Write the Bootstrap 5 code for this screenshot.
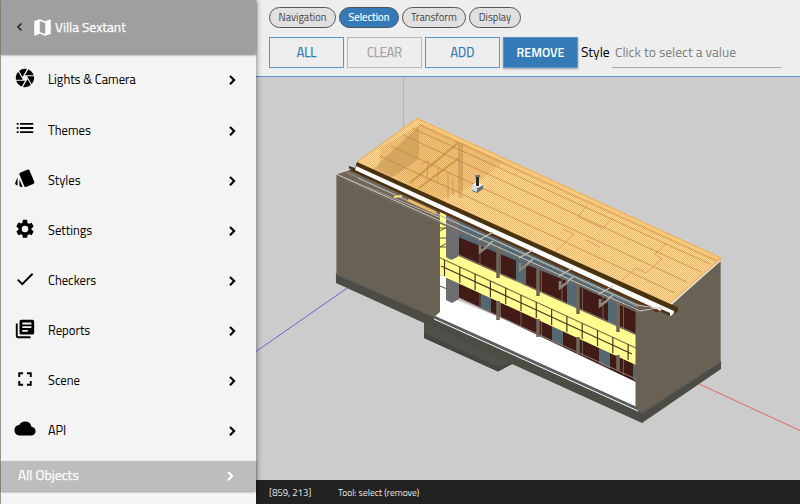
<!DOCTYPE html>
<html lang="en">
<head>
<meta charset="utf-8">
<meta name="viewport" content="width=device-width, initial-scale=1">
<title>Villa Sextant</title>
<link rel="stylesheet" href="https://cdn.jsdelivr.net/npm/bootstrap@5.3.0/dist/css/bootstrap.min.css">
<style>
body{font-family:"Titillium Web",Roboto,sans-serif;background:#ccc;font-size:12.7px;line-height:20px;color:#000}
.sidebar{width:256px;background:#f4f4f4;border-left:1px solid #9b958c;box-shadow:1px 0 5px rgba(0,0,0,.4);z-index:2}
.side-head{height:54px;background:#9f9f9f;color:#fff;font-size:13.6px;-webkit-text-stroke:.25px #fff;box-shadow:0 1px 2px rgba(0,0,0,.5);padding-left:14px;z-index:1}
.side-head .house{width:21px;height:21px;margin:0 2px 0 4px}
.menu{padding-top:1.4px}
.menu .entry{height:50.15px;padding:0 14px 0 12.500px}
.menu .entry>svg:first-child{width:22px;height:22px;margin-top:-4.500px}
.menu .entry span{margin-left:12.500px}
svg{flex:none;display:block}
.chev{width:18px;height:18px}
.all-objects{height:29.500px;margin-top:4.900px;background:#bdbdbd;color:#fff;font-size:13.7px;-webkit-text-stroke:.25px #fff;padding:0 16px 0 17px;box-shadow:0 1px 2px rgba(0,0,0,.4)}
.all-objects span{margin-top:-2px}
.toolbar{height:77px;background:#eee;border-bottom:1.500px solid #658fd6;padding:7px 0 0 13px}
.pills,.tools{gap:3px}
.tools-row{margin-top:9px}
.pill{height:21px;border:1px solid #555;border-radius:11px;background:#e0e0e0;color:#444;font-size:10.6px;line-height:19px;padding:0}
.pill.active{background:#337ab7;color:#fff;border-color:#4b555e;-webkit-text-stroke:.2px #fff}
.w-nav{width:67px}.w-sel{width:60px}.w-tra{width:64px}.w-dis{width:52px}
.tool{width:75px;height:31px;border:1px solid #5b96c9;border-radius:0;color:#337ab7;font-size:12.600px;-webkit-text-stroke:.25px currentColor;padding:0;line-height:29px;background:#eee}
.tool.off{border-color:#b9b9b9;color:#a3a3a3}
.tool.on{background:#337ab7;color:#fff;font-weight:600;-webkit-text-stroke:0;box-shadow:0 1px 2px rgba(0,0,0,.35)}
.style-label{font-size:13.700px;margin:-2px 0 0 3px;width:31px;white-space:nowrap}
.picker{width:170px;height:30px;border-bottom:1px solid #aaa;color:#808080;font-size:13.600px;line-height:28px;padding-left:3px;white-space:nowrap}
.status{height:24px;background:#212121;color:#e8e8e8;font-size:9.5px;padding-left:13px;line-height:25px}
.coords{width:69px}
</style>
<script src="https://cdn.jsdelivr.net/npm/bootstrap@5.3.0/dist/js/bootstrap.bundle.min.js"></script>
</head>
<body class="vh-100 overflow-hidden">
<div class="d-flex vh-100">
<aside class="sidebar flex-shrink-0 d-flex flex-column position-relative">
  <header class="side-head d-flex align-items-center position-relative">
    <svg width="9" height="12" viewBox="0 0 9 12"><path d="M6.500 2.500 3 6l3.500 3.500" fill="none" stroke="#222" stroke-width="1.5"/></svg>
    <svg class="house ms-2" viewBox="0 0 24 24" fill="#fff"><path d="M20.500 3l-.16.03L15 5.100 9 3 3.360 4.900A.5.5 0 0 0 3 5.380V20.500c0 .28.22.5.5.5l.16-.03L9 18.900l6 2.100 5.640-1.900a.5.5 0 0 0 .36-.48V3.500a.5.5 0 0 0-.5-.5zM15 19l-6-2.110V5l6 2.110V19z" transform="translate(-.6 -.6) scale(1.050)"/></svg>
    <span>Villa Sextant</span>
  </header>
  <nav class="menu d-flex flex-column" id="menu"></nav>
  <div class="all-objects d-flex align-items-center justify-content-between"><span>All Objects</span><svg class="chev" viewBox="0 0 24 24" fill="#fff"><path d="M9 5.500 7 7.500l4.500 4.500L7 16.500l2 2 6.500-6.500z"/></svg></div>
</aside>
<main class="flex-grow-1 d-flex flex-column">
  <div class="toolbar">
    <div class="pills d-flex">
      <button class="btn pill w-nav">Navigation</button>
      <button class="btn pill active w-sel">Selection</button>
      <button class="btn pill w-tra">Transform</button>
      <button class="btn pill w-dis">Display</button>
    </div>
    <div class="tools-row d-flex align-items-center">
      <div class="tools d-flex">
        <button class="btn tool">ALL</button><button class="btn tool off">CLEAR</button><button class="btn tool">ADD</button><button class="btn tool on">REMOVE</button>
      </div>
      <span class="style-label">Style</span><div class="picker">Click to select a value</div>
    </div>
  </div>
  <svg width="544" height="403" viewBox="256 77 544 403">
    <defs>
      <pattern id="hatch" width="2" height="2" patternUnits="userSpaceOnUse"><path fill="#ffd894" d="M0 0h2v2H0z"/><path fill="#f3bc70" d="M0 0h1v1H0zM1 1h1v1H1z"/></pattern>
      <clipPath id="roofclip"><path d="M417 118 721 258 670 304 357 163z"/></clipPath>
      <clipPath id="facade"><path d="M440 205 636 294V410L440 317z"/></clipPath>
      <clipPath id="windows"><path d="M458 205 636 286V336L458 257zM458 265 636 345V381L458 297z"/></clipPath>
    </defs>
    <path fill="#ccc" d="M256 77h544v403H256z"/>
    <path d="M403.500 77v56" stroke="#7fdc76"/><path d="M256 351.500 348 287.500" stroke="#6666d8"/><path d="M698 383.500 800 430.500" stroke="#e96862"/>
    <!-- plinth and steps -->
    <path fill="#4c4c45" d="M336 273 424 310 642 411 721 360V369L642 423 512 364 498 371.500 424 338V323L336 283z"/>
    <path fill="#504f49" d="M424 323 512 364 498 367 424 333z"/>
    <path fill="#454640" d="M424 333 498 367 512 362v2L498 371.500 424 338z"/>
    <path d="M336 273.500 434 316 642 412 721 361" fill="none" stroke="#5c5d60" stroke-width="2.500"/>
    <!-- terrace -->
    <path fill="#fff" d="M440 293 636 374V408L434 316z"/>
    <path d="M434 317 636 408" stroke="#5c5d60" stroke-width="3"/><path d="M434 319 638 411" stroke="#fff"/>
    <g clip-path="url(#facade)">
      <path fill="#421b17" d="M458 205 636 286V336L458 257z"/>
      <path fill="#536872" d="M458 208 636 290V309L458 237z"/>
      <path fill="#421b17" d="M458 265 636 345V382L458 297z"/>
      <path fill="#536872" d="M516 240h10v44h-10zM567 263h12v46h-12zM608 285h12v42h-12z"/>
      <path clip-path="url(#windows)" fill="#536872" d="M481 280h10v40h-10zM552 310h11v50h-11zM599 332h11v50h-11zM633 345h3v40h-3z"/>
      <g clip-path="url(#windows)" id="mullions"></g>
      <path fill="#6a6155" d="M440 203 636 292V296L440 208z"/>
    </g>
    <path d="M459 255 636 334M459 298 636 379" stroke="#898078" fill="none"/>
    <!-- end bay -->
    <path fill="#ffff8c" d="M440 212l7 3v46l-7-4z"/><path fill="#fff" d="M440 276h7v26l-7-3z"/>
    <path d="M440 228h7m-7 10h7m-7 9h7m-7-16 7-4m-7 20 7-4M440 286l7 3" stroke="#63503a" fill="none"/>
    <path fill="#6e6e70" d="M446 213l13 5v39l-8 3-5-3zM446 276h13v23l-7 4-6-3z"/>
    <!-- balcony -->
    <path fill="#ffff92" d="M459 256 636 335V365L436 273 440 270V257L452 260z"/>
    <g id="posts" stroke="#70675b"></g>
    <g stroke="#51321b" fill="none"><path d="M436 256 636 348" stroke="#86703c" stroke-width="1.300"/><path d="M441 266 632 354" stroke-width="1.300"/><g id="rails" stroke-width="1.200"></g></g>
    <!-- walls -->
    <path fill="#6a6155" d="M336 174 440 218V312L434 317 336 273z"/>
    <path fill="#6a6155" d="M635.500 298 665 311 675 302 721 259 720.500 361 648 408 642 412 635.500 409z"/>
    <path d="M336.500 174V273M720.500 260V361" stroke="#91897e"/>
    <!-- eaves -->
    <path fill="#71685d" d="M357 168 440 206V217L336 174z"/>
    <path fill="#5a3517" d="M352 168 662 311 656 312 362 176z"/>
    <g clip-path="url(#roofclip)">
      <path fill="url(#hatch)" d="M350 110h380v200H350z"/>
      <path fill="#b9822f" opacity=".22" d="M421 124 504 162 472 186 440 200 378 169 382 147z"/>
      <path fill="#8e6a35" opacity=".25" d="M419 126v33l-35 24-12-13zM458 143h5v55h-5z"/>
      <path d="M459 142 410 183M459 158 419 188" stroke="#b87d31" stroke-width="2" opacity=".55"/>
      <g fill="none" stroke="#b98743" opacity=".72"><path d="M403 135 701 272M391 146 687 282M380 156 675 293M412 128 710 264"/>
      <path d="M587 205 578 217 602 228M613 218 601 230M563 229 574 234 555 252M586 240 600 247M667 243 655 254 662 259 646 273 636 268 622 280M421 164 428 161 427 178M438 167v15M448 173v19M426 178l22 9v12M453 179v16" opacity=".8"/></g>
      <path d="M420 125 717 261" stroke="#d79a48" stroke-width="2" opacity=".6"/>
    </g>
    <path d="M357 162 417 118.500 721 258 671 302" fill="none" stroke="#efb25c" stroke-width="1.200"/>
    <path d="M671 304 721 260" stroke="#eee4d4" stroke-width="1.500"/>
    <!-- fascia -->
    <path fill="#49320f" d="M357 162 677 307V312L670 313 349 170V166l6 2z"/>
    <path fill="#fff" d="M356 166 675 311.500 671 316 662 311.500 355 170z"/>
    <path fill="#49320f" d="M661 309 670 313v3l-9-4zM674 310l4-3v4l-4 3z"/>
    <!-- pergola -->
    <g fill="none" stroke="#d8d4cb"><path d="M336 174 351 169M358 178 637 305 662 309M336 174 640 311 663 307" stroke-width=".9"/><path stroke="#746c63" stroke-width="1.500" d="M344 179.500 640 313"/><path d="M346 172 638 307" stroke="#aaa59c" stroke-width=".7"/><g id="beams" stroke-width="1.200"></g></g>
    <path d="M408 200 436 213" stroke="#edba62" stroke-width="3"/><path d="M394 197l8-1" stroke="#f2e675" stroke-width="2"/>
    <!-- chimney -->
    <path fill="#f2f2f2" d="m472 185 5-3 6 3-5 4z"/><path fill="#666e74" d="m472 185 6 3 5-3v4l-6 4-5-2z"/><path fill="#dadada" d="m472 185 5 2v5l-5-2z"/><path d="M477.500 176v10" stroke="#292929" stroke-width="3"/><path d="M475 176h5" stroke="#777" stroke-width="2"/>
  </svg>
  <footer class="status d-flex"><span class="coords">[859, 213]</span><span>Tool: select (remove)</span></footer>
</main>
</div>
<script>
const icons={
aperture:'<path d="M9.400 10.500l4.770-8.260a10 10 0 0 0-8.630 2.020l3.660 6.350zM21.540 9c-.92-2.920-3.150-5.260-6-6.340L11.880 9zm.26 1h-7.490l4.910 8.500A9.950 9.950 0 0 0 21.800 10zM8.540 12l-3.900-6.750A9.960 9.960 0 0 0 2.200 14h7.490zM2.460 15c.92 2.920 3.150 5.260 6 6.340L12.120 15zm11.270 0l-3.900 6.760a10 10 0 0 0 8.630-2.020l-3.660-6.350z"/>',
list:'<path d="M3 11h2v2H3zM3 15.500h2v2H3zM3 6.500h2v2H3zM6.500 11H21v2H6.500zM6.500 15.500H21v2H6.500zM6.500 6.500H21v2H6.500z"/>',
style:'<path d="M2.530 19.650l1.340.56v-9.030l-2.430 5.860c-.41 1.020.08 2.190 1.090 2.610zm19.500-3.700L17.070 3.980a2.010 2.010 0 0 0-2.590-1.080L7.100 5.950a2 2 0 0 0-1.080 2.600l4.960 11.970a2 2 0 0 0 2.600 1.080l7.360-3.050a2 2 0 0 0 1.090-2.600zM5.880 19.750c0 1.100.9 2 2 2h1.450l-3.450-8.340z"/>',
gear:'<path d="M19.140 12.940a7 7 0 0 0 0-1.880l2.030-1.580a.5.5 0 0 0 .12-.61l-1.920-3.320a.5.5 0 0 0-.59-.22l-2.390.96a7 7 0 0 0-1.620-.94l-.36-2.540A.5.5 0 0 0 13.920 2h-3.840a.5.5 0 0 0-.47.410l-.36 2.540c-.59.24-1.130.57-1.620.94l-2.390-.96a.5.5 0 0 0-.59.22L2.740 8.870a.5.5 0 0 0 .12.61l2.030 1.580a7 7 0 0 0 0 1.880l-2.030 1.580a.5.5 0 0 0-.12.61l1.920 3.320c.12.22.37.29.59.22l2.390-.96c.5.38 1.030.7 1.620.94l.36 2.540c.05.24.24.41.48.41h3.840c.24 0 .44-.17.47-.41l.36-2.540a7 7 0 0 0 1.620-.94l2.390.96c.22.08.47 0 .59-.22l1.920-3.320a.5.5 0 0 0-.12-.61zM12 15.600a3.600 3.600 0 1 1 0-7.200 3.600 3.600 0 0 1 0 7.200z" fill-rule="evenodd"/>',
check:'<path d="M9 16.170 4.830 12l-1.420 1.410L9 19 21 7l-1.410-1.410z"/>',
library:'<path d="M4 6H2v14a2 2 0 0 0 2 2h14v-2H4zM20 2H8a2 2 0 0 0-2 2v12a2 2 0 0 0 2 2h12a2 2 0 0 0 2-2V4a2 2 0 0 0-2-2zm-1 9H9V9h10zm-4 4H9v-2h6zm4-8H9V5h10z" fill-rule="evenodd"/>',
full:'<path d="M7 14H5v5h5v-2H7zM5 10h2V7h3V5H5zm12 7h-3v2h5v-5h-2zM14 5v2h3v3h2V5z" transform="translate(-.6 -.6) scale(1.050)"/>',
cloud:'<path d="M19.350 10.040A7.490 7.490 0 0 0 12 4C9.110 4 6.600 5.640 5.350 8.040A5.990 5.990 0 0 0 0 14c0 3.310 2.690 6 6 6h13c2.760 0 5-2.240 5-5 0-2.640-2.050-4.780-4.650-4.960z" transform="translate(.5 0) scale(.96)"/>'};
menu.innerHTML=[['aperture','Lights &amp; Camera'],['list','Themes'],['style','Styles'],['gear','Settings'],['check','Checkers'],['library','Reports'],['full','Scene'],['cloud','API']].map(([i,t])=>`<div class="entry d-flex align-items-center"><svg viewBox="0 0 24 24">${icons[i]}</svg><span>${t}</span><svg class="chev ms-auto" viewBox="0 0 24 24"><path d="M9 5.500 7 7.500l4.500 4.500L7 16.500l2 2 6.500-6.500z"/></svg></div>`).join('');
let m='',p='',r='',b='';
for(let x=480;x<636;x+=20.5){const y=215+(x-458)*.455;m+=`<path d="M${x} ${y}v90" stroke="#72665a" stroke-width=".9"/>`}
for(let i=0;i<4;i++){const x=498+i*40,y=249+i*18;p+=`<path d="M${x} ${y-3}v32m0 23v${19-i}" stroke-width="3.500"/>`;b+=`<path d="m${x-17} ${y+2} 12-10M${x-19} ${y-9}l14-8" stroke="#c8c4be"/><path d="M${x-18} ${y-4}v7l8-6" stroke-width="2.500" stroke="#8a847a"/>`}
for(let i=0;i<13;i++){const x=444.5+i*15.3,y=260+i*7;r+=`<path d="M${x} ${y}v16"/>`}
mullions.innerHTML=m;posts.innerHTML=p;rails.innerHTML=r;beams.innerHTML=b;
</script>
</body>
</html>
